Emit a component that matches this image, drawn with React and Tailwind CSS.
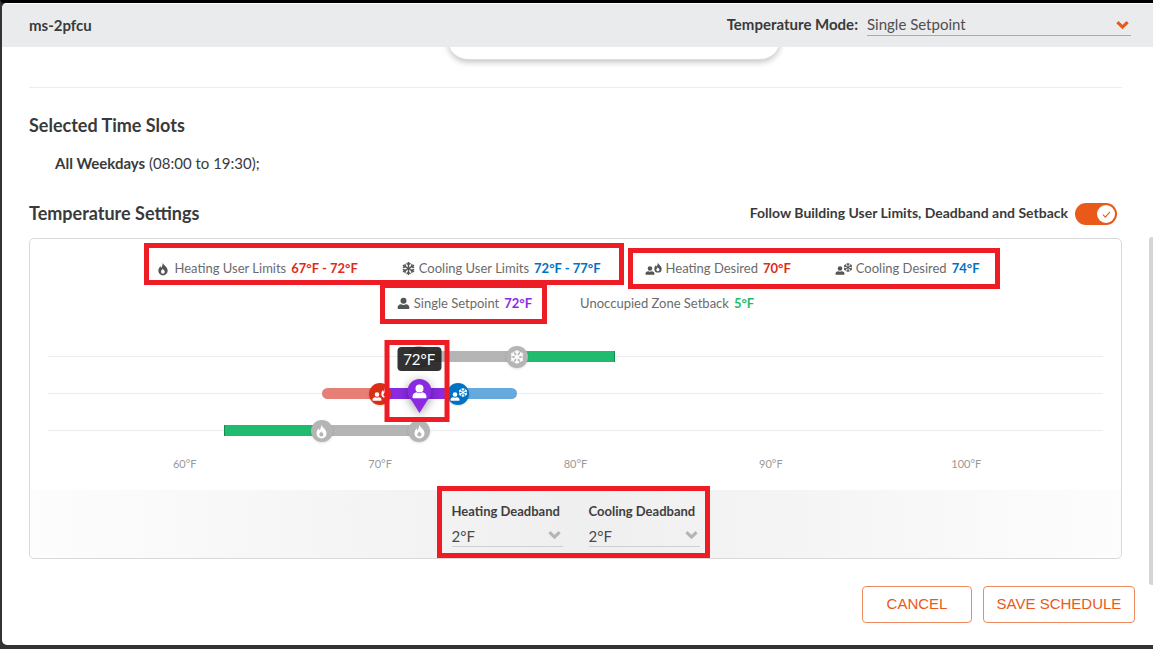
import { useState } from 'react';
import clsx from 'clsx';
import { FaRegSnowflake } from 'react-icons/fa';

const MIN_TEMP = 53;
const MAX_TEMP = 107;
const TICKS = [60, 70, 80, 90, 100];

const toPercent = (temp) => `${((temp - MIN_TEMP) / (MAX_TEMP - MIN_TEMP)) * 100}%`;

const toWidth = (from, to) => `${((to - from) / (MAX_TEMP - MIN_TEMP)) * 100}%`;

function FlameIcon({ className }) {
  return (
    <svg viewBox="4 0 16 24" className={className} fill="currentColor" aria-hidden="true">
      <path
        fillRule="evenodd"
        d="M11.500.500c.3 4.800 8.500 7.500 8.500 14.500A8 8 0 0 1 12 23a8 8 0 0 1-8-8c0-4 2-6.200 4-8.200 0 1.600.2 2.700.8 3.400C10.500 8 11.800 4.500 11.500.500zM11.800 11.500c-.6 1.800-3.300 2.700-3.300 5.200a3.300 3.300 0 0 0 6.600 0c0-2.200-2.600-2.900-3.300-5.200z"
      />
    </svg>
  );
}

function SnowIcon({ className }) {
  return <FaRegSnowflake className={clsx('stroke-current stroke-[8]', className)} aria-hidden="true" />;
}

function PersonIcon({ className }) {
  return (
    <svg viewBox="0 0 24 24" className={className} fill="currentColor" aria-hidden="true">
      <circle cx="12" cy="7" r="5.500" />
      <path d="M1 20.500C1 16 4 13.500 7.500 13.500c1.300.8 2.800 1.200 4.500 1.200s3.200-.4 4.500-1.200c3.500 0 6.500 2.500 6.500 7 0 1-.6 1.500-1.500 1.500h-19C1.600 22 1 21.500 1 20.500z" />
    </svg>
  );
}

function PersonWith({ icon: Icon, className }) {
  return (
    <span className={clsx('flex items-center', className)}>
      <PersonIcon className="mt-1 h-[11px] w-[10px] shrink-0" />
      <Icon className="-ml-px mb-[3px] h-[11px] w-[8px] shrink-0" />
    </span>
  );
}

function Chevron({ className }) {
  return (
    <svg viewBox="0 0 14 10" className={className} fill="none" stroke="currentColor" strokeWidth="3.400" aria-hidden="true">
      <path d="M1.500 1.800 7 7.200l5.500-5.400" />
    </svg>
  );
}

function Highlight({ className }) {
  return <span className={clsx('pointer-events-none absolute z-30 border-[5px] border-[#ee1c25]', className)} />;
}

function LegendItem({ icon, label, value, valueClass }) {
  return (
    <span className="flex items-center whitespace-nowrap">
      {icon}
      <span>{label}</span>
      <span className={clsx('ml-[5px] font-bold', valueClass)}>{value}</span>
    </span>
  );
}

function Track({ children }) {
  return (
    <div className="relative flex h-[37px] items-center">
      <div className="h-px w-full bg-[#ececec]" />
      {children}
    </div>
  );
}

function Bar({ from, to, className }) {
  return (
    <div
      className={clsx('absolute top-[13px] h-[11px]', className)}
      style={{ left: toPercent(from), width: toWidth(from, to) }}
    />
  );
}

function Marker({ temp, className, children }) {
  return (
    <div
      className={clsx(
        'absolute top-[8px] z-10 flex h-[22px] w-[22px] -translate-x-1/2 items-center justify-center rounded-full text-white shadow',
        className
      )}
      style={{ left: toPercent(temp) }}
    >
      {children}
    </div>
  );
}

function DeadbandSelect({ id, label, value, onChange }) {
  return (
    <div className="w-[111px]">
      <label htmlFor={id} className="block whitespace-nowrap text-[13px] leading-5 font-bold text-[#3f3f3f]">
        {label}
      </label>
      <div className="relative mt-1">
        <select
          id={id}
          value={value}
          onChange={(e) => onChange(e.target.value)}
          className="block h-[22px] w-full appearance-none rounded-none border-b border-[#cfcfcf] bg-transparent text-[15px] leading-5 text-[#4a4a4a] outline-none"
        >
          {[1, 2, 3, 4, 5].map((n) => (
            <option key={n} value={n}>{`${n}°F`}</option>
          ))}
        </select>
        <Chevron className="pointer-events-none absolute top-[5px] right-[2px] h-[10px] w-[13px] text-[#b5b5b5]" />
      </div>
    </div>
  );
}

export default function App() {
  const [mode, setMode] = useState('single');
  const [follow, setFollow] = useState(true);
  const [heatingDeadband, setHeatingDeadband] = useState('2');
  const [coolingDeadband, setCoolingDeadband] = useState('2');

  return (
    <div className="min-h-screen bg-white pr-1 font-['Lato',sans-serif] text-[#3a3a3a]">
      <div className="flex min-h-screen flex-col border-t-[3px] border-b-4 border-l-2 border-t-black border-b-[#333] border-l-[#333] bg-[#333]">
        <div className="flex flex-1 flex-col overflow-hidden rounded-l-[5px] bg-white">
          <header className="flex h-11 items-center justify-between border-t border-white bg-[#e9ebec] pr-[22px] pl-[27px]">
            <h1 className="pb-px text-[15px] leading-5 font-bold">ms-2pfcu</h1>
            <div className="flex items-center gap-[9px] pb-[3px]">
              <label htmlFor="mode" className="text-[15px] leading-6 font-bold">
                Temperature Mode:
              </label>
              <div className="relative w-[264px]">
                <select
                  id="mode"
                  value={mode}
                  onChange={(e) => setMode(e.target.value)}
                  className="block h-6 w-full appearance-none border-b border-[#a9abac] bg-transparent text-[15px] leading-5 text-[#4f4f4f] outline-none"
                >
                  <option value="single">Single Setpoint</option>
                  <option value="dual">Dual Setpoint</option>
                </select>
                <Chevron className="pointer-events-none absolute top-[8px] right-[2px] h-[10px] w-[13px] text-[#e8591a]" />
              </div>
            </div>
          </header>

          <div className="flex flex-1">
            <main className="min-w-0 flex-1 pr-[27px] pl-[27px]">
              <div className="flex h-[41px] justify-center overflow-hidden border-b border-[#ededed]">
                <div className="-mt-12 ml-[76px] h-[61px] w-[332px] rounded-[20px] border-b border-[#dcdcdc] bg-white shadow-[0_2px_6px_rgba(0,0,0,0.25)]" />
              </div>

              <section className="pt-[25px]">
                <h2 className="text-[18px] leading-6 font-bold">Selected Time Slots</h2>
                <p className="mt-[14px] pl-[26px] text-[15px] leading-6">
                  <strong>All Weekdays</strong> (08:00 to 19:30);
                </p>
              </section>

              <section className="pt-[26px]">
                <div className="flex h-6 items-center justify-between pr-[5px]">
                  <h2 className="text-[18px] leading-6 font-bold">Temperature Settings</h2>
                  <label className="flex items-end gap-[7px] text-[14px] leading-6 font-bold">
                    Follow Building User Limits, Deadband and Setback
                    <span className="relative flex">
                      <input
                        type="checkbox"
                        checked={follow}
                        onChange={(e) => setFollow(e.target.checked)}
                        className="h-[22px] w-[42px] appearance-none rounded-full bg-[#bbb] checked:bg-[#e8591a]"
                      />
                      <span
                        className={clsx(
                          'pointer-events-none absolute top-[2px] flex h-[18px] w-[18px] items-center justify-center rounded-full bg-white text-[#e8591a]',
                          follow ? 'right-[2px]' : 'left-[2px]'
                        )}
                      >
                        {follow && (
                          <svg viewBox="0 0 10 8" className="h-[7px] w-[9px]" fill="none" stroke="currentColor" strokeWidth="1.200">
                            <path d="M1 4.200 3.600 7 9 1" />
                          </svg>
                        )}
                      </span>
                    </span>
                  </label>
                </div>

                <div className="mt-[13px] rounded-[5px] border border-[#d9d9d9]">
                  <div className="pt-3 text-[13px] text-[#6b6b6b]">
                    <div className="flex h-[35px] items-center justify-center gap-11 pr-[14px]">
                      <div className="relative flex h-[35px] items-center gap-11">
                        <Highlight className="-top-2 -right-[23px] -left-[14px] h-[42px]" />
                        <LegendItem
                          icon={<FlameIcon className="mr-[7px] h-[14px] w-[10px] text-[#555]" />}
                          label="Heating User Limits"
                          value="67°F - 72°F"
                          valueClass="text-[#dc2c17]"
                        />
                        <LegendItem
                          icon={<SnowIcon className="mr-1 h-[13px] w-[13px] text-[#555]" />}
                          label="Cooling User Limits"
                          value="72°F - 77°F"
                          valueClass="text-[#0072c6]"
                        />
                      </div>
                      <div className="relative flex h-[35px] items-center gap-11">
                        <Highlight className="-top-[3px] -right-5 -left-[17px] h-[41px]" />
                        <LegendItem
                          icon={<PersonWith icon={FlameIcon} className="mr-1 text-[#555]" />}
                          label="Heating Desired"
                          value="70°F"
                          valueClass="text-[#dc2c17]"
                        />
                        <LegendItem
                          icon={<PersonWith icon={SnowIcon} className="mr-1 text-[#555]" />}
                          label="Cooling Desired"
                          value="74°F"
                          valueClass="text-[#0072c6]"
                        />
                      </div>
                    </div>
                    <div className="flex h-[35px] items-center justify-center gap-12">
                      <div className="relative flex h-[35px] items-center">
                        <Highlight className="-top-[3px] -right-[15px] -left-[17px] h-[41px]" />
                        <LegendItem
                          icon={<PersonIcon className="mr-1 h-[13px] w-[13px] text-[#555]" />}
                          label="Single Setpoint"
                          value="72°F"
                          valueClass="text-[#8a2be2]"
                        />
                      </div>
                      <LegendItem label="Unoccupied Zone Setback" value="5°F" valueClass="text-[#1fbb6c]" />
                    </div>
                  </div>

                  <div className="mt-[17px] mr-[18px] ml-[18px]">
                    <Track>
                      <Bar from={72} to={77} className="bg-[#b5b5b5]" />
                      <Bar from={77} to={82} className="border-r border-[#178a50] bg-[#20bb6f]" />
                      <Marker temp={72} className="bg-[#b5b5b5]">
                        <SnowIcon className="h-[14px] w-[14px]" />
                      </Marker>
                      <Marker temp={77} className="bg-[#b5b5b5]">
                        <SnowIcon className="h-[14px] w-[14px]" />
                      </Marker>
                    </Track>
                    <Track>
                      <Bar from={67} to={70} className="rounded-l-full bg-[#e67f76]" />
                      <Bar from={70} to={74} className="bg-[#8a2be2]" />
                      <Bar from={74} to={77} className="rounded-r-full bg-[#66a9dd]" />
                      <Marker temp={70} className="bg-[#da2d18]">
                        <PersonWith icon={FlameIcon} />
                      </Marker>
                      <Marker temp={74} className="bg-[#0072c6]">
                        <PersonWith icon={SnowIcon} />
                      </Marker>
                      <div
                        className="absolute -top-[28px] z-20 flex w-[65px] -translate-x-1/2 flex-col items-center"
                        style={{ left: toPercent(72) }}
                      >
                        <div className="rounded-[4px] bg-[#1c1c1c]/90 px-[6px] text-[15px] leading-6 text-white">72°F</div>
                        <div className="mt-[8px] drop-shadow-[0_2px_5px_rgba(0,0,0,0.4)]">
                          <svg viewBox="0 0 24 34" className="h-[34px] w-6 text-[#8a2be2]" fill="currentColor">
                            <path d="M12 0a12 12 0 0 1 12 12c0 4.500-2.500 7.500-4.500 10L12 34 4.500 22C2.500 19.500 0 16.500 0 12A12 12 0 0 1 12 0z" />
                            <circle cx="12" cy="9.500" r="4" fill="#fff" />
                            <path d="M5 18c0-3 2-4.500 4.200-4.700 1.700 1.200 3.900 1.200 5.600 0C17 13.500 19 15 19 18c0 1-.5 1.300-1.200 1.300H6.200C5.500 19.300 5 19 5 18z" fill="#fff" />
                          </svg>
                        </div>
                        <Highlight className="-top-[7px] right-[2px] -left-[2px] h-[82px]" />
                      </div>
                    </Track>
                    <Track>
                      <Bar from={62} to={67} className="border-l border-[#178a50] bg-[#20bb6f]" />
                      <Bar from={67} to={72} className="bg-[#b5b5b5]" />
                      <Marker temp={67} className="bg-[#b5b5b5]">
                        <FlameIcon className="h-[15px] w-[11px]" />
                      </Marker>
                      <Marker temp={72} className="bg-[#b5b5b5]">
                        <FlameIcon className="h-[15px] w-[11px]" />
                      </Marker>
                    </Track>
                    <div className="relative h-[41px]">
                      {TICKS.map((temp) => (
                        <span
                          key={temp}
                          className="absolute top-[7px] -translate-x-1/2 text-[11px] leading-4 text-[#999]"
                          style={{ left: toPercent(temp) }}
                        >
                          {temp}°F
                        </span>
                      ))}
                    </div>
                  </div>

                  <div className="flex h-[68px] justify-center rounded-b-[5px] bg-linear-to-r from-[#fdfdfd] via-[#efefef] to-[#fdfdfd] pt-[11px]">
                    <div className="relative flex gap-[26px]">
                      <Highlight className="-top-[15px] -right-[10px] -left-[15px] h-[72px]" />
                      <DeadbandSelect
                        id="heating-deadband"
                        label="Heating Deadband"
                        value={heatingDeadband}
                        onChange={setHeatingDeadband}
                      />
                      <DeadbandSelect
                        id="cooling-deadband"
                        label="Cooling Deadband"
                        value={coolingDeadband}
                        onChange={setCoolingDeadband}
                      />
                    </div>
                  </div>
                </div>
              </section>
            </main>
            <div className="mt-[190px] h-[348px] w-1 rounded-l-[3px] bg-[#d5d5d5]" />
          </div>

          <footer className="flex justify-end gap-[11px] pr-[18px] pb-[22px] font-['Liberation_Sans',sans-serif] text-[15px] text-[#e8591a]">
            <button type="button" className="h-[37px] w-[110px] rounded-[4px] border border-[#ee8a5f]">
              CANCEL
            </button>
            <button type="button" className="h-[37px] w-[152px] rounded-[4px] border border-[#ee8a5f]">
              SAVE SCHEDULE
            </button>
          </footer>
        </div>
      </div>
    </div>
  );
}
